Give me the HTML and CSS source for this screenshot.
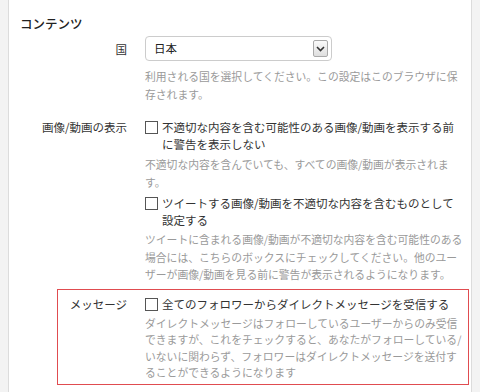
FILE: index.html
```html
<!DOCTYPE html>
<html lang="ja">
<head>
    <meta charset="UTF-8">
    <title>コンテンツ</title>
    <link rel="stylesheet" href="styles.css">
</head>
<body>
    <div class="panel">
        <h2 class="heading">コンテンツ</h2>

        <!-- 国 -->
        <div class="row">
            <div class="label">国</div>
            <div class="field">
                <div class="select">
                    <span>日本</span>
                    <span class="select-btn">
                        <svg width="9" height="6" viewBox="0 0 9 6"><path d="M1 1l3.5 3.5L8 1" fill="none" stroke="#333" stroke-width="1.6"/></svg>
                    </span>
                </div>
                <p class="help help-select">利用される国を選択してください。この設定はこのブラウザに保<br>存されます。</p>
            </div>
        </div>

        <!-- 画像/動画の表示 -->
        <div class="row row-media">
            <div class="label">画像/動画の表示</div>
            <div class="field">
                <label class="check">
                    <span class="box"></span>
                    <span>不適切な内容を含む可能性のある画像/動画を表示する前<br>に警告を表示しない</span>
                </label>
                <p class="help">不適切な内容を含んでいても、すべての画像/動画が表示されま<br>す。</p>
                <label class="check check-next">
                    <span class="box"></span>
                    <span>ツイートする画像/動画を不適切な内容を含むものとして<br>設定する</span>
                </label>
                <p class="help help-tight">ツイートに含まれる画像/動画が不適切な内容を含む可能性のある<br>場合には、こちらのボックスにチェックしてください。他のユー<br>ザーが画像/動画を見る前に警告が表示されるようになります。</p>
            </div>
        </div>

        <!-- メッセージ -->
        <div class="row row-marked">
            <div class="label">メッセージ</div>
            <div class="field">
                <label class="check">
                    <span class="box"></span>
                    <span>全てのフォロワーからダイレクトメッセージを受信する</span>
                </label>
                <p class="help">ダイレクトメッセージはフォローしているユーザーからのみ受信<br>できますが、これをチェックすると、あなたがフォローしている/<br>いないに関わらず、フォロワーはダイレクトメッセージを送付す<br>ることができるようになります</p>
            </div>
        </div>
    </div>
</body>
</html>
```

FILE: styles.css
```css
body {
    margin: 0;
    background-color: #f3f3f3;
    font-family: "Noto Sans CJK JP", "Noto Sans", sans-serif;
    color: #333;
}
.panel {
    margin-left: 8px;
    width: 464px;
    min-height: 392px;
    box-sizing: border-box;
    background-color: #fff;
    border-left: 1px solid #dcdcdc;
    border-right: 1px solid #dcdcdc;
    padding: 14px 0 0 11px;
}
.heading {
    margin: 0 0 2px 0;
    font-size: 12.5px;
    font-weight: 500;
    line-height: 20px;
    color: #222;
}
.row {
    display: grid;
    grid-template-columns: 107px minmax(0, 1fr);
    column-gap: 18px;
}
.label {
    text-align: right;
    font-size: 11.5px;
    line-height: 17px;
}
.row:first-of-type .label {
    line-height: 27px;
}
.field {
    font-size: 11.5px;
    line-height: 17px;
    white-space: nowrap;
}
.select {
    width: 187px;
    height: 25px;
    box-sizing: border-box;
    border: 1px solid #ccc;
    border-radius: 4px;
    padding: 0 3px 0 8px;
    display: flex;
    align-items: center;
    justify-content: space-between;
    font-size: 11.5px;
    color: #222;
}
.select-btn {
    width: 15px;
    height: 17px;
    box-sizing: border-box;
    border: 1px solid #a9a9a9;
    border-radius: 2px;
    background: linear-gradient(#fafafa, #dedede);
    display: flex;
    align-items: center;
    justify-content: center;
}
.help {
    margin: 3px 0 2px 0;
    font-size: 10.8px;
    line-height: 17.5px;
    color: #9a9a9a;
}
.help-select {
    margin-top: 7px;
}
.help-tight {
    margin-top: 2px;
}
.row-media {
    margin-top: 14px;
}
.check {
    display: flex;
    gap: 4px;
    color: #333;
}
.check-next {
    margin-top: 4px;
}
.box {
    flex: none;
    width: 13px;
    height: 13px;
    box-sizing: border-box;
    margin-top: 2px;
    border: 1px solid #555;
    background-color: #fff;
}
.row-marked {
    margin: 3px 0 0 37px;
    width: 412px;
    box-sizing: border-box;
    grid-template-columns: 69px minmax(0, 1fr);
    border: 1px solid #e04c50;
    padding: 6px 8px 3px 0;
}
.row-marked .help {
    margin: 2px 0 0 0;
    line-height: 16.5px;
}
```
